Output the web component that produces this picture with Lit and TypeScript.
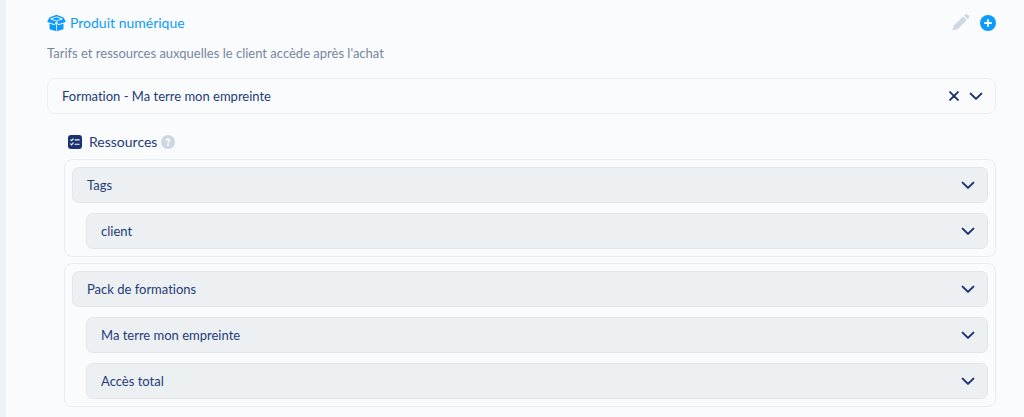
import { LitElement, html, css, svg } from "lit";
import { customElement, property, state } from "lit/decorators.js";

const chevron = html`<svg class="chevron" viewBox="0 0 14 14" width="14" height="14" aria-hidden="true">
  ${svg`<path d="M1.600 4.600 7 9.900l5.400-5.300" fill="none" stroke="currentColor" stroke-width="2" stroke-linecap="round" stroke-linejoin="round"/>`}
</svg>`;

interface Entry {
  name: string;
  items: string[];
}

@customElement("resource-group")
export class ResourceGroup extends LitElement {
  @property({ attribute: false }) entry: Entry = { name: "", items: [] };

  static styles = css`
    :host {
      display: flex;
      flex-direction: column;
      gap: 10px;
      padding: 7px;
      border: 1px solid #e9edf1;
      border-radius: 8px;
    }
    .row {
      display: flex;
      align-items: center;
      justify-content: space-between;
      box-sizing: border-box;
      height: 36px;
      padding: 0 12px 0 14px;
      border: 1px solid #e1e6ea;
      border-radius: 7px;
      background: #edf0f3;
      color: #233c78;
      font: inherit;
      font-variant-ligatures: none;
      text-align: left;
      cursor: pointer;
    }
    .child {
      margin-left: 14px;
    }
    .chevron {
      flex: none;
      color: #1b3272;
    }
  `;

  render() {
    return html`
      <button class="row" type="button"><span>${this.entry.name}</span>${chevron}</button>
      ${this.entry.items.map(
        (item) => html`<button class="row child" type="button"><span>${item}</span>${chevron}</button>`
      )}
    `;
  }
}

@customElement("app-root")
export class AppRoot extends LitElement {
  @state() private product = "Formation - Ma terre mon empreinte";

  private groups: Entry[] = [
    { name: "Tags", items: ["client"] },
    { name: "Pack de formations", items: ["Ma terre mon empreinte", "Accès total"] },
  ];

  static styles = css`
    :host {
      display: block;
      box-sizing: border-box;
      min-height: 100vh;
      padding: 13px 28px 10px 41px;
      border-left: 6px solid #eff3f6;
      background: #fafbfd;
      color: #233c78;
      font: 13px/20px Lato, "Liberation Sans", sans-serif;
      font-variant-ligatures: none;
    }
    .head {
      display: flex;
      align-items: center;
      justify-content: space-between;
    }
    .title {
      display: flex;
      align-items: center;
      gap: 4px;
      margin: 0;
      color: #0c9cfb;
      font-size: 14px;
      font-weight: 400;
    }
    .actions {
      display: flex;
      align-items: center;
      gap: 10px;
    }
    .icon-button {
      display: flex;
      padding: 0;
      border: 0;
      background: none;
      color: inherit;
      cursor: pointer;
    }
    .edit {
      color: #cdd6e1;
    }
    .add {
      color: #0c9cfb;
    }
    .intro {
      margin: 10px 0 15px;
      color: #76869f;
    }
    .picker {
      display: grid;
      align-items: center;
      height: 34px;
      border: 1px solid #eceff3;
      border-radius: 8px;
    }
    .select {
      grid-area: 1 / 1;
      appearance: none;
      width: 100%;
      height: 34px;
      padding: 0 60px 0 14px;
      border: 0;
      background: none;
      color: inherit;
      font: inherit;
      font-variant-ligatures: none;
    }
    .picker-icons {
      grid-area: 1 / 1;
      justify-self: end;
      display: flex;
      align-items: center;
      gap: 10px;
      padding-right: 12px;
      color: #1b3272;
      pointer-events: none;
    }
    .picker-icons .icon-button {
      pointer-events: auto;
    }
    .resources {
      display: flex;
      flex-direction: column;
      gap: 6px;
      margin-left: 17px;
    }
    .subtitle {
      display: flex;
      align-items: center;
      gap: 4px;
      margin: 18px 0 1px 4px;
      font-size: 14px;
      font-weight: 400;
    }
    .subtitle .name {
      margin-left: 3px;
    }
  `;

  render() {
    return html`
      <header class="head">
        <h2 class="title">
          <svg viewBox="0 0 19 18" width="19" height="18" aria-hidden="true">
            <g fill="currentColor">
              <path d="M9.500.800 16.600 3.400 18.600 7.300q.2.500-.3.700L16.500 8.700v6q0 .7-.7.900L9.500 17.300 3.200 15.600q-.7-.2-.7-.9v-6L.7 8q-.5-.2-.3-.7L2.400 3.400z" />
            </g>
            <g fill="none" stroke="#fafbfd" stroke-linejoin="round">
              <path d="M3.600 4.900 9.500 2.900l5.900 2L9.500 7z" stroke-width=".9" />
              <path d="M2.300 9.100 7.800 10.700 9.500 7.600l1.700 3.100 5.500-1.600" stroke-width="1" />
              <path d="M9.500 8.500v8.300" stroke-width=".8" />
            </g>
          </svg>
          Produit numérique
        </h2>
        <div class="actions">
          <button class="icon-button edit" type="button" aria-label="Modifier">
            <svg viewBox="0 0 18 18" width="18" height="18" aria-hidden="true">
              <g transform="translate(0 -1)" fill="currentColor">
                <path d="M11 3.500 14.700 7.200 5.800 15.900 1 17.300q-.6.100-.5-.5L2.100 12.200z" />
                <path d="M12 2.600 13.200 1.500q1.200-1.100 2.400 0l1.100 1.100q1.200 1.200 0 2.400L15.600 6.200z" />
              </g>
            </svg>
          </button>
          <button class="icon-button add" type="button" aria-label="Ajouter">
            <svg viewBox="0 0 16 16" width="16" height="16" aria-hidden="true">
              <circle cx="8" cy="8" r="8" fill="currentColor" />
              <path d="M8 4.900v6.200M4.900 8h6.200" stroke="#fff" stroke-width="1.800" stroke-linecap="round" />
            </svg>
          </button>
        </div>
      </header>
      <p class="intro">Tarifs et ressources auxquelles le client accède après l'achat</p>

      <div class="picker">
        <select class="select" aria-label="Produit numérique">
          <option>${this.product}</option>
        </select>
        <div class="picker-icons">
          <button class="icon-button" type="button" aria-label="Effacer">
            <svg viewBox="0 0 10 10" width="10" height="10" aria-hidden="true">
              <path d="M1.100 1.100l7.800 7.800M8.900 1.100 1.100 8.900" stroke="currentColor" stroke-width="1.900" stroke-linecap="round" />
            </svg>
          </button>
          ${chevron}
        </div>
      </div>

      <section class="resources">
        <h3 class="subtitle">
          <svg viewBox="0 0 14 14" width="14" height="14" aria-hidden="true">
            <rect width="14" height="14" rx="3" fill="#1b3272" />
            <path
              d="M2.700 4.800l.9.900 1.600-1.900M2.700 8.900l.9.900 1.600-1.900M7 4.900h4.200M7 9.200h4.200"
              fill="none"
              stroke="#fafbfd"
              stroke-width="1.100"
              stroke-linecap="round"
              stroke-linejoin="round"
            />
          </svg>
          <span class="name">Ressources</span>
          <svg viewBox="0 0 14 14" width="14" height="14" aria-hidden="true">
            <circle cx="7" cy="7" r="7" fill="#cdd6e1" />
            <path
              d="M5.300 5.500C5.400 4.400 6.100 4 7 4s1.700.5 1.700 1.400C8.700 6.600 7 6.600 7 7.900"
              fill="none"
              stroke="#fff"
              stroke-width="1.500"
              stroke-linecap="round"
            />
            <circle cx="7" cy="10.200" r="1" fill="#fff" />
          </svg>
        </h3>
        ${this.groups.map((g) => html`<resource-group .entry=${g}></resource-group>`)}
      </section>
    `;
  }
}
